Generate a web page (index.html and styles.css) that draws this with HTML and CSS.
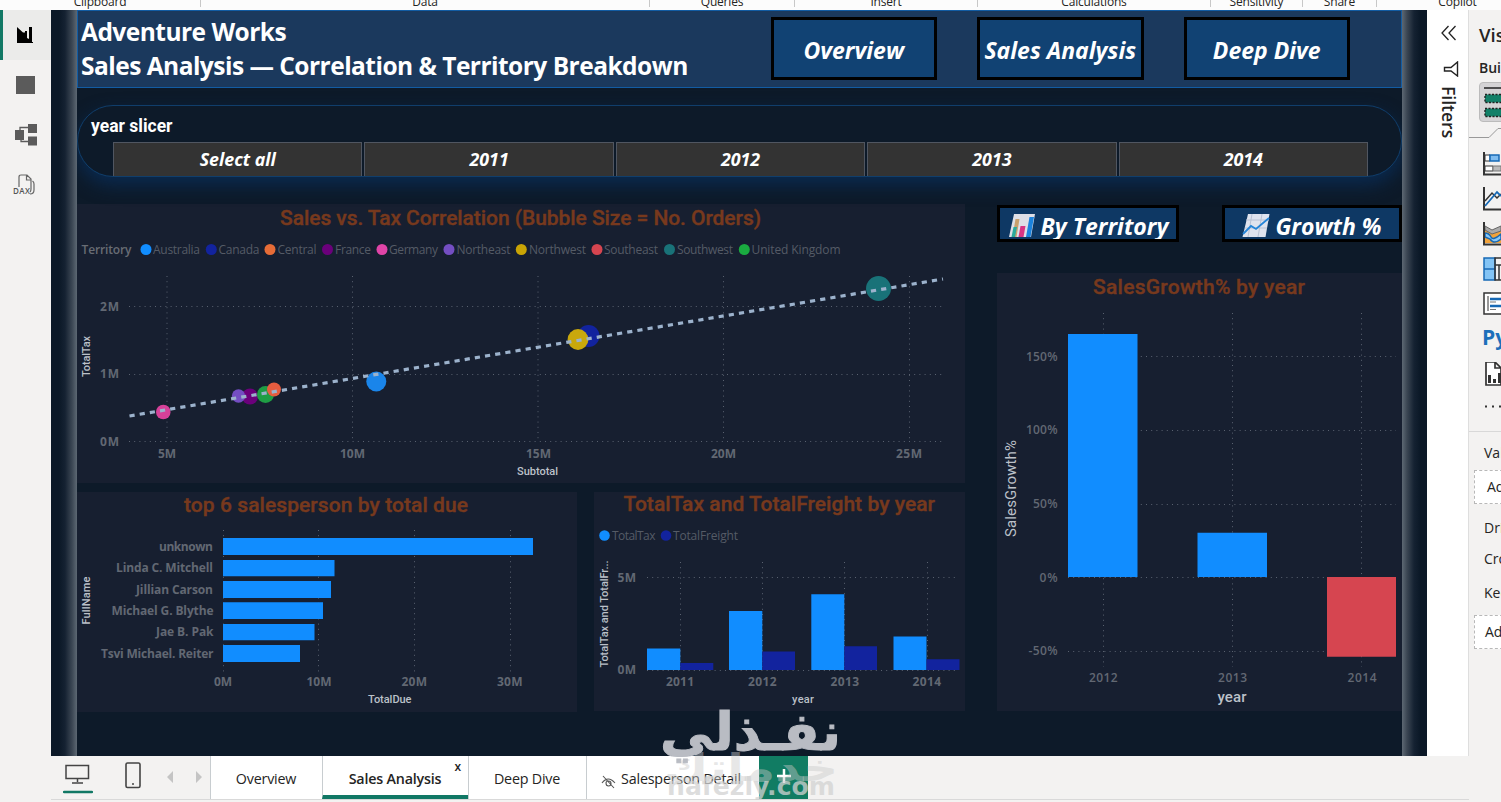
FILE: index.html
```html
<!DOCTYPE html>
<html lang="en">
<head>
  <meta charset="UTF-8" />
  <title>Adventure Works</title>
  <link rel="stylesheet" href="styles.css">
</head>
<body>

  <!-- Ribbon group labels -->
  <div class="ribbon">
    <span class="group g-clipboard">Clipboard</span>
    <span class="group g-data">Data</span>
    <span class="group g-queries">Queries</span>
    <span class="group g-insert">Insert</span>
    <span class="group g-calc">Calculations</span>
    <span class="group g-sens">Sensitivity</span>
    <span class="group g-share">Share</span>
    <span class="group g-copilot">Copilot</span>
  </div>

  <div class="workspace">
    <!-- View switcher -->
    <nav class="views">
      <div class="view active">
        <svg width="18" height="18" viewBox="0 0 18 18"><path d="M1 1l6 5.500h2V5h2v7l2 1V1h3v15h1v1H1z" fill="#000"/></svg>
      </div>
      <div class="view">
        <svg width="20" height="18" viewBox="0 0 20 18"><rect width="19" height="18" fill="#5b5b5b"/></svg>
      </div>
      <div class="view">
        <svg width="22" height="22" viewBox="0 0 22 22"><path d="M5 8V3.500h8M6 14v3.500h7" fill="none" stroke="#5b5b5b" stroke-width="1.300"/><path d="M0 6h9v10H0zM13 0h9v9h-9zM13 12.500h9v9h-9z" fill="#5b5b5b"/></svg>
      </div>
      <div class="view">
        <svg width="24" height="22" viewBox="0 0 24 22"><path d="M7 13V3q0-2 2-2h6l4 4v10q0 2-1 3M14.500 1v5H19M20.500 7q1.500 1 1.500 3v6q0 4-4 4" fill="none" stroke="#666" stroke-width="1.200"/><text x="1" y="20" textLength="17" class="dax">DAX</text></svg>
      </div>
    </nav>

    <div class="center">
      <div class="stage">
        <main class="report">
          <header class="banner">
            <h1>Adventure Works<br><span class="subtitle">Sales Analysis — Correlation &amp; Territory Breakdown</span></h1>
            <div class="page-nav">
              <button><span>Overview</span></button>
              <button><span>Sales Analysis</span></button>
              <button><span>Deep Dive</span></button>
            </div>
          </header>

          <section class="slicer">
            <h2>year slicer</h2>
            <div class="tiles">
              <button>Select all</button>
              <button>2011</button>
              <button>2012</button>
              <button>2013</button>
              <button>2014</button>
            </div>
          </section>

          <div class="charts">
            <div class="left">
              <!-- Scatter -->
              <svg class="panel" width="888" height="279" viewBox="77 204 888 279">
                <text class="title" x="280" y="225" textLength="481">Sales vs. Tax Correlation (Bubble Size = No. Orders)</text>
                <g class="legend">
                  <text class="strong" x="81.500" y="254" textLength="50">Territory</text>
                  <circle cx="146" cy="249.500" r="5.500" fill="#118dff"/><text x="153" y="254" textLength="47">Australia</text>
                  <circle cx="211.300" cy="249.500" r="5.500" fill="#12239e"/><text x="218.500" y="254" textLength="41">Canada</text>
                  <circle cx="270" cy="249.500" r="5.500" fill="#e66c37"/><text x="277.500" y="254" textLength="39">Central</text>
                  <circle cx="327.500" cy="249.500" r="5.500" fill="#6b007b"/><text x="335" y="254" textLength="36">France</text>
                  <circle cx="382" cy="249.500" r="5.500" fill="#e044a7"/><text x="389" y="254" textLength="49">Germany</text>
                  <circle cx="449" cy="249.500" r="5.500" fill="#744ec2"/><text x="456.500" y="254" textLength="54">Northeast</text>
                  <circle cx="521.300" cy="249.500" r="5.500" fill="#c9a405"/><text x="529" y="254" textLength="57">Northwest</text>
                  <circle cx="597" cy="249.500" r="5.500" fill="#d64550"/><text x="604" y="254" textLength="54">Southeast</text>
                  <circle cx="669.500" cy="249.500" r="5.500" fill="#197278"/><text x="677" y="254" textLength="56">Southwest</text>
                  <circle cx="744.300" cy="249.500" r="5.500" fill="#1aab40"/><text x="751.500" y="254" textLength="89">United Kingdom</text>
                </g>
                <path class="grid" d="M129 306.500H944M129 374.500H944M129 441.500H944M167 276V442M352.500 276V442M538 276V442M723.500 276V442M909.500 276V442"/>
                <g class="ticks">
                  <text x="100" y="311" textLength="19">2M</text>
                  <text x="100" y="378" textLength="19">1M</text>
                  <text x="100" y="446" textLength="19">0M</text>
                  <text x="158" y="458" textLength="18">5M</text>
                  <text x="340" y="458" textLength="25">10M</text>
                  <text x="526" y="458" textLength="25">15M</text>
                  <text x="711" y="458" textLength="25">20M</text>
                  <text x="896" y="458" textLength="26">25M</text>
                </g>
                <text class="axis" x="517" y="475" textLength="41">Subtotal</text>
                <text class="axis" transform="translate(90 377) rotate(-90)" textLength="41">TotalTax</text>
                <circle cx="163.300" cy="412" r="7.300" fill="#d64199"/>
                <circle cx="250" cy="396.500" r="8" fill="#6b007b"/>
                <circle cx="238.500" cy="396" r="6.700" fill="#744ec2"/>
                <circle cx="265.500" cy="394.500" r="8.500" fill="#1f9d44"/>
                <circle cx="274" cy="389.500" r="7" fill="#e65c3f"/>
                <circle cx="376.300" cy="381.500" r="10" fill="#1a85ea"/>
                <circle cx="588.500" cy="336" r="11" fill="#12239e"/>
                <circle cx="578" cy="339.500" r="10.400" fill="#c9a80c"/>
                <circle cx="878.500" cy="288.500" r="12.500" fill="#197278"/>
                <path class="trend" d="M129.500 416L943 279"/>
              </svg>

              <div class="row">
                <!-- Salespeople -->
                <svg class="panel" width="500" height="220" viewBox="77 492 500 220">
                  <text class="title" x="184" y="512" textLength="284">top 6 salesperson by total due</text>
                  <path class="grid" d="M223.500 530V672M318.500 530V672M414.500 530V672M510.500 530V672"/>
                  <path fill="#118dff" d="M223 538h310v17H223zM223 560h111.500v16.300H223zM223 581h108v17H223zM223 602.300h100v16.700H223zM223 624h91.500v16.300H223zM223 645h77v17H223z"/>
                  <g class="ticks">
                    <text x="159" y="551" textLength="54">unknown</text>
                    <text x="116" y="572" textLength="97">Linda C. Mitchell</text>
                    <text x="136" y="594" textLength="77">Jillian Carson</text>
                    <text x="111.500" y="615" textLength="102">Michael G. Blythe</text>
                    <text x="156" y="636" textLength="57.500">Jae B. Pak</text>
                    <text x="101" y="658" textLength="112.500">Tsvi Michael. Reiter</text>
                    <text x="214" y="686" textLength="18">0M</text>
                    <text x="306.500" y="686" textLength="25">10M</text>
                    <text x="401.500" y="686" textLength="25.500">20M</text>
                    <text x="497" y="686" textLength="25.500">30M</text>
                  </g>
                  <text class="axis" x="368" y="703" textLength="43.500">TotalDue</text>
                  <text class="axis" transform="translate(90 624.500) rotate(-90)" textLength="48">FullName</text>
                </svg>

                <!-- Tax and freight -->
                <svg class="panel" width="371" height="219" viewBox="594 492 371 219">
                  <text class="title" x="623.500" y="511" textLength="311.500">TotalTax and TotalFreight by year</text>
                  <g class="legend">
                    <circle cx="604.500" cy="535.500" r="5.300" fill="#118dff"/><text x="612" y="540" textLength="43.500">TotalTax</text>
                    <circle cx="666" cy="535.500" r="5.300" fill="#12239e"/><text x="673" y="540" textLength="65">TotalFreight</text>
                  </g>
                  <path class="grid" d="M647 577.500H959M647 670.500H959M680.500 562V670M762.500 562V670M844.500 562V670M927.500 562V670"/>
                  <path fill="#118dff" d="M647 648.500h33.300V670H647zM729 611h33.300v59H729zM811.300 594.300h33V670h-33zM893.500 636.500h33V670h-33z"/>
                  <path fill="#12239e" d="M680.300 663h33v7h-33zM762.300 651.500h32.700V670h-32.700zM844.300 646.300h32.700V670h-32.700zM926.500 659.300h33V670h-33z"/>
                  <g class="ticks">
                    <text x="617.500" y="582" textLength="18.500">5M</text>
                    <text x="617.500" y="674" textLength="18.500">0M</text>
                    <text x="666" y="686" textLength="28">2011</text>
                    <text x="748" y="686" textLength="28.500">2012</text>
                    <text x="830.500" y="686" textLength="28.500">2013</text>
                    <text x="912.500" y="686" textLength="28.500">2014</text>
                  </g>
                  <text class="axis" x="792" y="703" textLength="22">year</text>
                  <text class="axis" transform="translate(608 667.500) rotate(-90)" textLength="107">TotalTax and TotalFr...</text>
                </svg>
              </div>
            </div>

            <div class="right">
              <div class="bookmarks">
                <button>
                  <svg width="28" height="25" viewBox="0 0 28 25"><path d="M6 1h21l-4 23H1z" fill="#dedfe6"/><path d="M4.500 24l3-18h4l-3 18z" fill="#c8a06c"/><path d="M3.500 24l2-10h3.500l-2 10z" fill="#2ba99b"/><path d="M10.500 24l2-11h5l-2 11z" fill="#d73483"/><path d="M18 24l3.500-20h4.500l-3.500 20z" fill="#1b83dd"/></svg>
                  <span>By Territory</span>
                </button>
                <button>
                  <svg width="28" height="25" viewBox="0 0 28 25"><path d="M6 1h21.500l-4 23H.5z" fill="#dfe3ee"/><path d="M4 7h23M3 15h22M10 1L6 24M20 1l-4 23" stroke="#b9c2d4" stroke-width="1"/><path d="M1 21l8-8 5 3 13-11" fill="none" stroke="#2384d8" stroke-width="1.800"/></svg>
                  <span>Growth %</span>
                </button>
              </div>
              <!-- Growth -->
              <svg class="panel" width="405" height="438" viewBox="997 273 405 438">
                <text class="title" x="1093" y="294" textLength="212">SalesGrowth% by year</text>
                <path class="grid" d="M1068 356.500H1396M1068 430.500H1396M1068 504.500H1396M1068 577.500H1396M1068 651.500H1396M1103.500 313V667M1232.500 313V667M1361.500 313V667"/>
                <path fill="#118dff" d="M1068 334h69.500v243H1068zM1197.500 532.700h69.500V577h-69.500z"/>
                <path fill="#d64550" d="M1327 577h69v79.700h-69z"/>
                <g class="ticks medium">
                  <text x="1026" y="361" textLength="31.500">150%</text>
                  <text x="1026" y="434" textLength="31.500">100%</text>
                  <text x="1033" y="508" textLength="24.500">50%</text>
                  <text x="1039.500" y="582" textLength="18">0%</text>
                  <text x="1028.500" y="655" textLength="29">-50%</text>
                  <text x="1089" y="682" textLength="28.500">2012</text>
                  <text x="1218" y="682" textLength="29">2013</text>
                  <text x="1347.500" y="682" textLength="29">2014</text>
                </g>
                <text class="axis large" x="1217.500" y="702" textLength="29">year</text>
                <text class="axis large thin" transform="translate(1016 537) rotate(-90)" textLength="97">SalesGrowth%</text>
              </svg>
            </div>
          </div>
        </main>

        <aside class="filters">
          <svg width="18" height="16" viewBox="0 0 18 16"><path d="M9.500 1L3 8l6.500 7M16.500 1L10 8l6.500 7" fill="none" stroke="#222" stroke-width="1.300"/></svg>
          <svg class="funnel" width="16" height="16" viewBox="0 0 16 16"><path d="M14.500 1v14L8 10H1.500V6.500H8z" fill="none" stroke="#222" stroke-width="1.400"/></svg>
          <span>Filters</span>
        </aside>
      </div>

      <!-- Page tabs -->
      <footer class="tabs">
        <div class="layouts">
          <svg class="on" width="30" height="32" viewBox="0 0 30 32"><path d="M3 3.500h22.500v13H3zM14.500 16.500V20M9 21h11" fill="none" stroke="#444" stroke-width="1.500"/><path d="M1 30h28" stroke="#117865" stroke-width="2.500" stroke-linecap="round"/></svg>
          <svg class="phone" width="16" height="27" viewBox="0 0 16 27"><rect x="1" y="1" width="14" height="24.500" rx="1.500" fill="none" stroke="#444" stroke-width="1.600"/><circle cx="8" cy="22" r="1" fill="#444"/></svg>
          <svg class="arrows" width="38" height="12" viewBox="0 0 38 12"><path d="M7 0v12L1 6zM30 0v12l6-6z" fill="#c4c4c4"/></svg>
        </div>
        <div class="tab t-overview">Overview</div>
        <div class="tab t-sales">Sales Analysis<span class="close">x</span></div>
        <div class="tab t-deep">Deep Dive</div>
        <div class="tab t-detail">
          <svg width="15" height="14" viewBox="0 0 15 14"><path d="M1 8q6-8 13 0M2 1l11 12M5 8q0-2 2.500-2t2.500 2.500-2.500 2.500Q5 11 5 8" fill="none" stroke="#555" stroke-width="1.100"/></svg>
          Salesperson Detail
        </div>
        <div class="add"><svg width="14" height="14" viewBox="0 0 14 14"><path d="M7 0v14M0 7h14" stroke="#fff" stroke-width="2.500"/></svg></div>
      </footer>
    </div>

    <!-- Visualizations pane, cut by the window edge -->
    <aside class="visuals">
      <h3>Vis</h3>
      <h4>Bui</h4>
      <div class="build">
        <svg width="20" height="34" viewBox="0 0 20 34"><path d="M1 2h20" stroke="#222" stroke-width="1.500"/><path d="M2 8.500h20v8H2zM2 22.500h20v8H2z" fill="#118068" stroke="#222" stroke-width="1.400" stroke-dasharray="2 1.500"/></svg>
      </div>
      <svg class="notch" width="32" height="12" viewBox="0 0 32 12"><path d="M0 10.500h20l9-9h3" fill="none" stroke="#999"/></svg>
      <div class="gallery">
        <svg viewBox="0 0 18 24"><path d="M2 3h5v6H2zM2 14h8v5H2z" fill="#fff" stroke="#333"/><path d="M7 3h9v6H7z" fill="#7fbcf0" stroke="#1769b5" stroke-width="1.500"/><path d="M10 14h8v5h-8z" fill="#bbb" stroke="#777"/><path d="M1 0v22.500h17" fill="none" stroke="#333" stroke-width="2"/></svg>
        <svg viewBox="0 0 18 24"><path d="M1 0v22.500h17" fill="none" stroke="#333" stroke-width="2"/><path d="M2 14l7-8 5 5 4-4" fill="none" stroke="#333" stroke-width="1.500"/><path d="M2 19L14 5l4 4" fill="none" stroke="#1769b5" stroke-width="1.800"/></svg>
        <svg viewBox="0 0 18 24"><path d="M2 5l7 4 9-3v15H2z" fill="#f2a33a"/><path d="M2 4l7 4 9-4v5l-9 3-7-4z" fill="#aaa" stroke="#666"/><path d="M2 11q4 0 6 4t10-3v5q-7 6-11 0l-5-2z" fill="#8ac8f5" stroke="#1769b5" stroke-width="1.500"/><path d="M1 0v22.500h17" fill="none" stroke="#333" stroke-width="2"/></svg>
        <svg viewBox="0 0 18 24"><path d="M1 1h11v22H1z" fill="#83c4f5" stroke="#1769b5" stroke-width="1.500"/><path d="M1 12h11" stroke="#1769b5" stroke-width="1.500"/><path d="M18 1h-6v22h6M12 8h6M16 8v15" fill="none" stroke="#333" stroke-width="1.500"/></svg>
        <svg viewBox="0 0 18 24"><path d="M18 1H1v21h17" fill="#fff" stroke="#333" stroke-width="1.500"/><path d="M5 4v15" stroke="#333"/><path d="M7 7h11M7 14h11" stroke="#1769b5" stroke-width="2.500"/><path d="M7 10h6M7 17.500h6" stroke="#777"/></svg>
        <span class="py">Py</span>
        <svg viewBox="0 0 18 24"><path d="M3 0h9l6 6v17H3zM12 0v6h6" fill="#fff" stroke="#333" stroke-width="1.700"/><path d="M5 13h3v8H5zM10 17h3v4h-3zM15 11h3v10h-3z" fill="#333"/></svg>
        <svg viewBox="0 0 18 24"><path d="M2 8.500h2v2H2zM9 8.500h2v2H9zM16 8.500h2v2h-2z" fill="#333"/></svg>
      </div>
      <div class="fields">
        <p>Val</p>
        <div class="well">Ad</div>
        <p class="drill">Dri</p>
        <p class="cross">Cro</p>
        <p class="keep">Kee</p>
        <div class="well second">Ad</div>
      </div>
    </aside>
  </div>

  <!-- Watermark -->
  <svg class="watermark" width="190" height="100" viewBox="655 702 190 100">
    <text class="wm-shade" direction="rtl" x="838" y="781" textLength="174" lengthAdjust="spacingAndGlyphs">خدماتك</text>
    <text class="wm-main" direction="rtl" x="841" y="750" textLength="181" lengthAdjust="spacingAndGlyphs">نفـذلي</text>
    <text class="wm-url" x="667" y="795" textLength="168" lengthAdjust="spacingAndGlyphs">nafezly.com</text>
  </svg>

</body>
</html>
```
FILE: styles.css
```css
:root {
  --ink: #252423;
  --chrome: #f3f2f1;
  --night: #0d1a29;
  --panel: #171f30;
  --teal: #117865;
}

* {
  box-sizing: border-box;
  margin: 0;
  padding: 0;
}
body {
  width: 1501px;
  height: 802px;
  overflow: hidden;
  background: var(--chrome);
  font-family: "Open Sans", "Noto Sans", sans-serif;
  color: var(--ink);
}
button {
  font-family: inherit;
  color: #fff;
}

/* Ribbon */
.ribbon {
  display: flex;
  height: 10px;
  background: #fcfcfc;
  overflow: hidden;
}
.group {
  flex: none;
  height: 8px;
  margin-top: -1px;
  border-right: 1px solid #c8c8c8;
  font-size: 12px;
  line-height: 6px;
  letter-spacing: -0.2px;
  text-align: center;
}
.g-clipboard { width: 201px; }
.g-data { width: 449px; }
.g-queries { width: 145px; }
.g-insert { width: 183px; }
.g-calc { width: 233px; }
.g-sens { width: 92px; }
.g-share { width: 74px; }
.g-copilot { width: 162px; }

.workspace {
  display: flex;
  height: 792px;
}

/* Left rail */
.views {
  width: 51px;
  background: var(--chrome);
}
.view {
  height: 50px;
  display: flex;
  align-items: center;
  justify-content: center;
  padding-bottom: 1px;
}
.view.active {
  background: #ebebea;
  border-left: 3px solid var(--teal);
  padding-right: 4px;
}
.view:nth-child(4) { padding-right: 3px; }
.dax {
  font-size: 8px;
  font-weight: 600;
  fill: #555;
}

.center {
  width: 1418px;
}
.stage {
  display: flex;
  height: 746px;
}

/* Report page; the gutters glow next to the page edge */
.report {
  width: 1376px;
  padding: 0 25px 0 26px;
  background:
    linear-gradient(to left, #5d6873 0, #3b4653 5px, #152232 12px, #0b1827 18px) 0 0 / 26px 100% no-repeat,
    linear-gradient(to right, #5d6873 0, #3b4653 5px, #152232 12px, #0b1827 18px) 100% 0 / 25px 100% no-repeat,
    var(--night);
}
.banner {
  display: flex;
  justify-content: space-between;
  height: 78px;
  padding: 4px 51px 0 3px;
  background: #1b395d;
  border: 1px solid #125ca3;
}
.banner h1 {
  font-size: 24.500px;
  font-weight: 700;
  line-height: 34px;
  letter-spacing: -0.52px;
  color: #fff;
  white-space: nowrap;
}
.page-nav {
  display: flex;
  gap: 40px;
  margin-top: 2px;
}
.page-nav button {
  width: 166.500px;
  height: 63px;
  padding-top: 2px;
  background: #114273;
  border: 3px solid #000;
  font-size: 23px;
  font-weight: 700;
  font-style: italic;
  white-space: nowrap;
  display: flex;
  align-items: center;
  justify-content: center;
}

/* Slicer */
.slicer {
  height: 72px;
  margin-top: 17px;
  padding: 9px 33px 0 35px;
  border: 1px solid #103e6b;
  border-radius: 36px;
  background: var(--night);
  box-shadow: 0 8px 18px #0a2a50;
  clip-path: inset(-16px 0 -30px 0);
}
.slicer h2 {
  margin-left: -22px;
  font-family: Roboto, sans-serif;
  font-size: 17.500px;
  font-weight: 700;
  line-height: 22px;
  color: #fff;
}
.tiles {
  display: flex;
  gap: 2px;
  margin-top: 5px;
}
.tiles button {
  flex: 1;
  height: 34px;
  padding-bottom: 2px;
  background: #333;
  border: 1px solid #505661;
  border-bottom: 0;
  font-size: 17.800px;
  font-weight: 700;
  font-style: italic;
}

/* Charts */
.charts {
  display: flex;
  justify-content: space-between;
  margin-top: 27px;
}
.panel {
  display: block;
  background: var(--panel);
}
.row {
  display: flex;
  align-items: flex-start;
  justify-content: space-between;
  margin-top: 9px;
}
.bookmarks {
  display: flex;
  justify-content: space-between;
  margin: 1px 0 31px;
  width: 405px;
}
.bookmarks button {
  display: flex;
  align-items: center;
  justify-content: center;
  gap: 5px;
  width: 182px;
  height: 37px;
  padding-top: 4px;
  background: #0e3864;
  border: 3px solid #000;
  font-size: 23px;
  font-weight: 700;
  font-style: italic;
  white-space: nowrap;
  overflow: hidden;
}
.bookmarks button:last-child { width: 180px; }
.title {
  font: 500 21px Roboto, sans-serif;
  fill: #77391d;
  stroke: #77391d;
  stroke-width: 0.4px;
}
.legend text {
  font-size: 12px;
  fill: #555b66;
}
.legend .strong {
  font-weight: 600;
  fill: #686c74;
}
.ticks text {
  font-size: 12px;
  font-weight: 700;
  fill: #626873;
}
.ticks.medium text { font-weight: 600; }
.axis {
  font: 500 11px Roboto, sans-serif;
  fill: #bcc1c9;
}
.axis.large { font-size: 15px; }
.axis.thin { font-weight: 400; }
.grid {
  fill: none;
  stroke: #5a6270;
  stroke-width: 1;
  stroke-dasharray: 1 4.200;
}
.trend {
  fill: none;
  stroke: #9cb2cc;
  stroke-width: 3.200;
  stroke-dasharray: 5.200 5.100;
}

/* Collapsed filters pane */
.filters {
  width: 42px;
  background: #fff;
  border-right: 1px solid #dedede;
  display: flex;
  flex-direction: column;
  align-items: center;
  padding-top: 15px;
}
.funnel { margin: 20px 0 9px 7px; }
.filters span {
  writing-mode: vertical-rl;
  margin-left: 2px;
  font-size: 17.500px;
  font-weight: 600;
  line-height: 22px;
}

/* Page tabs */
.tabs {
  display: flex;
  height: 44px;
  border-bottom: 1px solid #d9d9d9;
}
.layouts {
  display: flex;
  width: 159px;
  padding: 6px 0 0 12px;
}
.phone { margin-left: 32px; }
.arrows { margin: 9px 0 0 25px; }
.tab {
  display: flex;
  align-items: center;
  justify-content: center;
  position: relative;
  background: #fff;
  border-left: 1px solid #c8cdd0;
  font-size: 14.300px;
  letter-spacing: -0.2px;
  white-space: nowrap;
  padding: 2px 1px 0 0;
}
.t-overview { width: 112px; }
.t-sales {
  width: 146px;
  border-bottom: 4px solid var(--teal);
  padding-top: 6px;
  font-weight: 600;
}
.close {
  position: absolute;
  top: 2px;
  right: 7px;
  font-size: 12px;
}
.t-deep { width: 118px; }
.t-detail {
  width: 173px;
  gap: 5px;
  padding-right: 4px;
}
.t-detail svg { margin-top: 6px; }
.add {
  width: 49px;
  background: #117c63;
  display: flex;
  align-items: center;
  justify-content: center;
  padding-bottom: 3px;
}

/* Visualizations pane */
.visuals {
  width: 32px;
  overflow: hidden;
  white-space: nowrap;
}
.visuals h3 {
  margin: 11px 0 0 10px;
  font-size: 18.500px;
  font-weight: 600;
  line-height: 28px;
}
.visuals h4 {
  margin: 8px 0 4px 10px;
  font-size: 14px;
  font-weight: 600;
  line-height: 21px;
}
.build {
  width: 40px;
  height: 40px;
  margin-left: 10px;
  padding: 3px;
  background: #d4d3d5;
  border: 1px solid #bbb;
  border-radius: 4px;
}
.notch {
  display: block;
  margin-top: 5px;
}
.gallery {
  display: flex;
  flex-direction: column;
  gap: 11px;
  margin: 13px 0 0 14px;
}
.gallery svg {
  width: 18px;
  height: 24px;
}
.py {
  height: 24px;
  margin-left: -1px;
  font-size: 21px;
  font-weight: 700;
  line-height: 20px;
  color: #1c6fba;
}
.fields {
  margin-top: 10px;
  padding-top: 10px;
  border-top: 1px solid #d8d8d8;
  font-size: 14px;
}
.fields p {
  margin-left: 15px;
  line-height: 21px;
}
.well {
  width: 50px;
  height: 34px;
  margin: 7px 0 0 5px;
  padding-left: 12px;
  background: #fff;
  border: 1px dashed #b8b8b8;
  line-height: 32px;
}
.fields .drill { margin-top: 13px; }
.fields .cross { margin-top: 10px; }
.fields .keep { margin-top: 13px; }
.well.second {
  margin-top: 12px;
  padding-left: 10px;
}

/* Watermark lies over the page and the tabs */
.watermark {
  position: absolute;
  left: 655px;
  top: 702px;
}
.wm-main {
  font: bold 52px "DejaVu Sans", sans-serif;
  fill: #b9bcc3;
  stroke: #b9bcc3;
  stroke-width: 1px;
}
.wm-shade {
  font: bold 38px "DejaVu Sans", sans-serif;
  fill: #c9c9c9;
  fill-opacity: 0.45;
}
.wm-url {
  font: bold 25px "DejaVu Sans", sans-serif;
  fill: #d2d2d2;
  fill-opacity: 0.75;
}
```
